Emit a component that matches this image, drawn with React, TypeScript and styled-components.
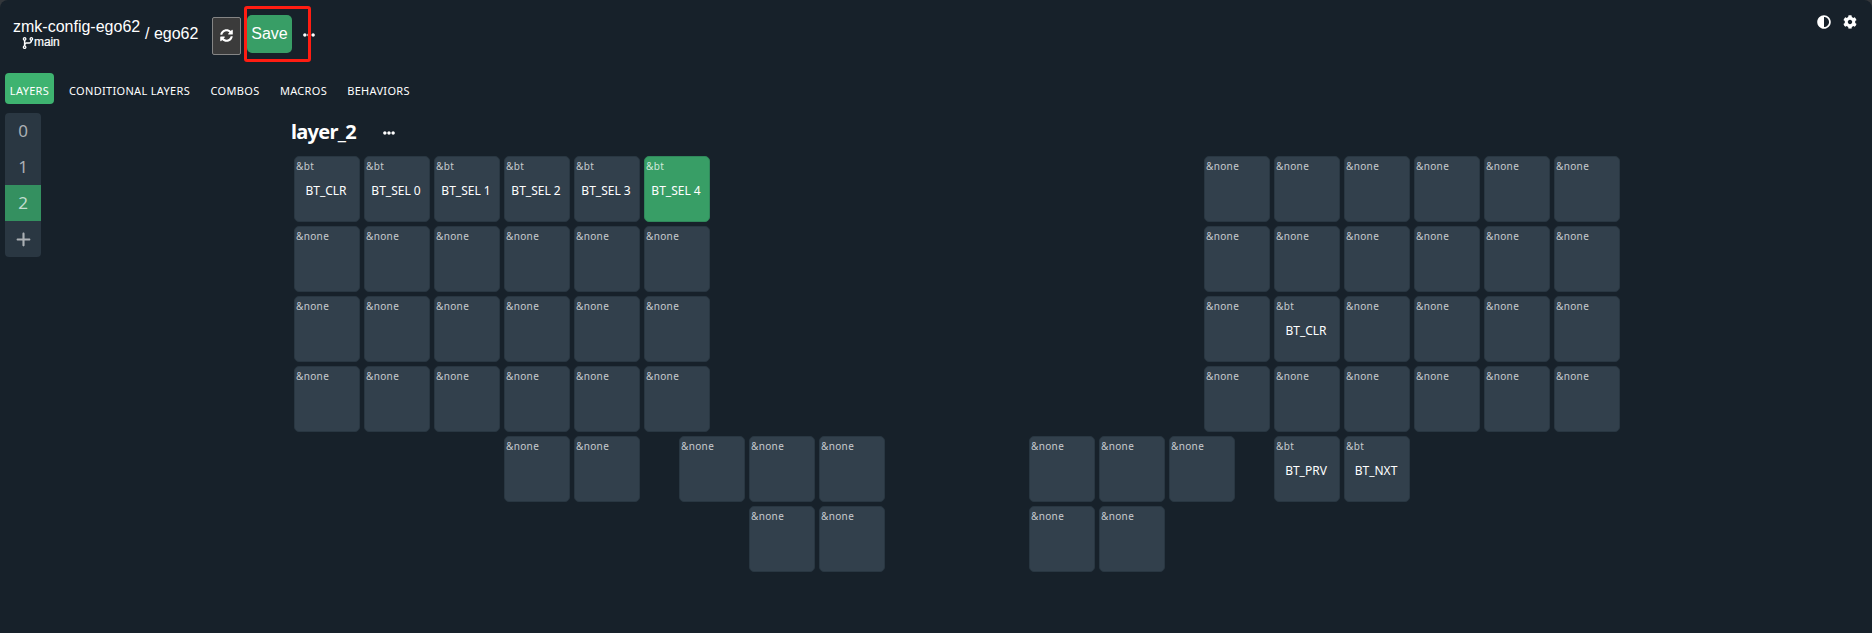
import React from 'react';
import styled, { createGlobalStyle } from 'styled-components';
import { FaSyncAlt, FaEllipsisH, FaAdjust, FaCog } from 'react-icons/fa';
import { FaCodeBranch, FaPlus } from 'react-icons/fa6';

const ui = '"Noto Sans", "Open Sans", sans-serif';
const arial = '"Liberation Sans", Arial, sans-serif';

const GlobalStyle = createGlobalStyle`
  * { box-sizing: border-box; }
  body { margin: 0; background: #33373b; color: #fff; font-family: ${ui}; }
  button { font: inherit; color: inherit; border: 0; padding: 0; background: none; }
`;

const Page = styled.div`
  height: 633px;
  background: #17212a;
  border-radius: 8px 8px 0 0;
  overflow: hidden;
  position: relative;
`;
const Header = styled.header`
  display: flex;
  height: 73px;
  padding: 0 13px;
  font-family: ${arial};
  font-size: 16px;
  white-space: nowrap;
`;
const Repo = styled.div`
  width: 128px;
  padding-top: 17px;
  line-height: 19px;
`;
const Branch = styled.div`
  display: flex;
  align-items: center;
  height: 13px;
  padding-left: 9px;
  font-size: 12px;
  line-height: 13px;
  letter-spacing: -0.1px;
  -webkit-text-stroke: 0.2px #fff;
`;
const Keyboard = styled.div`
  width: 71px;
  padding: 24px 0 0 4px;
  line-height: 20px;
`;
const RefreshButton = styled.button`
  display: grid;
  place-items: center;
  width: 29px;
  height: 38px;
  margin-top: 17px;
  padding: 0 1px 2px 0;
  background: #3b3b3b;
  border: 1px solid #858585;
  border-radius: 2px;
`;
const SaveButton = styled.button`
  width: 45px;
  height: 38px;
  margin: 15px 11px 0 6px;
  background: #389e66;
  border-radius: 5px;
`;
const MoreButton = styled.button`
  display: grid;
  place-items: center;
  width: 12px;
  height: 12px;
  margin-top: 29px;
`;
const HeaderActions = styled.div`
  display: flex;
  gap: 12px;
  margin: 15px 2px 0 auto;
`;
const Highlight = styled.div`
  position: absolute;
  left: 244px;
  top: 6px;
  width: 67px;
  height: 56px;
  border: 3px solid #ff1d12;
  border-radius: 3px;
`;
const Tabs = styled.nav`
  display: flex;
  height: 31px;
  padding-left: 5px;
  gap: 10px;
`;
const Tab = styled.button<{ $w: number; $active?: boolean }>`
  width: ${p => p.$w}px;
  height: 31px;
  padding-top: 5px;
  border-radius: 4px;
  background: ${p => (p.$active ? '#3eb370' : 'transparent')};
  font-size: 11px;
  line-height: 26px;
  letter-spacing: 0.32px;
  white-space: nowrap;
`;
const Main = styled.main`
  display: flex;
  padding: 9px 0 0 5px;
`;
const LayerList = styled.div`
  width: 36px;
  height: 144px;
  border-radius: 4px;
  overflow: hidden;
  background: #2a3742;
`;
const LayerItem = styled.button<{ $active?: boolean }>`
  display: grid;
  place-items: center;
  width: 36px;
  height: 36px;
  padding-bottom: 1px;
  background: ${p => (p.$active ? '#349060' : 'transparent')};
  color: ${p => (p.$active ? '#c2ddcf' : '#abb0b4')};
  font-size: 17px;
`;
const AddLayer = styled(LayerItem)`
  padding-bottom: 0;
`;
const Editor = styled.section`
  padding-left: 250px;
`;
const Title = styled.div`
  display: flex;
  align-items: center;
  height: 40px;
`;
const Name = styled.h2`
  width: 92px;
  margin: 0;
  font-size: 20px;
  line-height: 38px;
  height: 40px;
  letter-spacing: -0.7px;
`;
const Board = styled.div`
  display: grid;
  grid-template-columns: repeat(38, 35px);
  grid-auto-rows: 70px;
  padding: 3px 0 0 3px;
`;
const Key = styled.div<{ $col: number; $row: number; $active?: boolean }>`
  grid-column: ${p => p.$col + 1} / span 2;
  grid-row: ${p => p.$row + 1};
  width: 66px;
  height: 66px;
  padding: 0 1px;
  border: 1px solid ${p => (p.$active ? '#30885b' : '#293742')};
  border-radius: 5px;
  background: ${p => (p.$active ? '#389e66' : '#32404c')};
`;
const Behavior = styled.div<{ $active?: boolean }>`
  height: 18px;
  font-size: 10px;
  line-height: 18px;
  letter-spacing: 0.35px;
  color: ${p => (p.$active ? '#d0eadb' : '#c6cace')};
`;
const Param = styled.div`
  padding-right: 2px;
  font-size: 12px;
  line-height: 32px;
  text-align: center;
  white-space: nowrap;
`;

type KeyData = { row: number; col: number; param?: string };
const outer = [0, 2, 4, 6, 8, 10, 26, 28, 30, 32, 34, 36];
const positions = [outer, outer, outer, outer, [6, 8, 11, 13, 15, 21, 23, 25, 28, 30], [13, 15, 21, 23]];
const params: Record<string, string> = {
  '0-0': 'BT_CLR', '0-2': 'BT_SEL 0', '0-4': 'BT_SEL 1', '0-6': 'BT_SEL 2', '0-8': 'BT_SEL 3', '0-10': 'BT_SEL 4',
  '2-28': 'BT_CLR', '4-28': 'BT_PRV', '4-30': 'BT_NXT',
};
const keys: KeyData[] = positions.flatMap((cols, row) => cols.map(col => ({ row, col, param: params[`${row}-${col}`] })));

export default function App() {
  return (
    <Page>
      <GlobalStyle />
      <Header>
        <Repo>
          zmk-config-ego62
          <Branch><FaCodeBranch size={12} />main</Branch>
        </Repo>
        <Keyboard>/ ego62</Keyboard>
        <RefreshButton aria-label="Refresh"><FaSyncAlt size={13} /></RefreshButton>
        <SaveButton>Save</SaveButton>
        <MoreButton aria-label="More"><FaEllipsisH size={12} /></MoreButton>
        <HeaderActions><FaAdjust size={14} /><FaCog size={14} /></HeaderActions>
      </Header>
      <Tabs>
        <Tab $w={49} $active>LAYERS</Tab>
        <Tab $w={131}>CONDITIONAL LAYERS</Tab>
        <Tab $w={60}>COMBOS</Tab>
        <Tab $w={57}>MACROS</Tab>
        <Tab $w={73}>BEHAVIORS</Tab>
      </Tabs>
      <Main>
        <LayerList>
          <LayerItem>0</LayerItem>
          <LayerItem>1</LayerItem>
          <LayerItem $active>2</LayerItem>
          <AddLayer aria-label="Add layer"><FaPlus size={17} /></AddLayer>
        </LayerList>
        <Editor>
          <Title><Name>layer_2</Name><FaEllipsisH size={12} /></Title>
          <Board>
            {keys.map(k => {
              const active = k.param === 'BT_SEL 4';
              return (
                <Key key={`${k.row}-${k.col}`} $row={k.row} $col={k.col} $active={active}>
                  <Behavior $active={active}>{k.param ? '&bt' : '&none'}</Behavior>
                  {k.param && <Param>{k.param}</Param>}
                </Key>
              );
            })}
          </Board>
        </Editor>
      </Main>
      <Highlight />
    </Page>
  );
}
